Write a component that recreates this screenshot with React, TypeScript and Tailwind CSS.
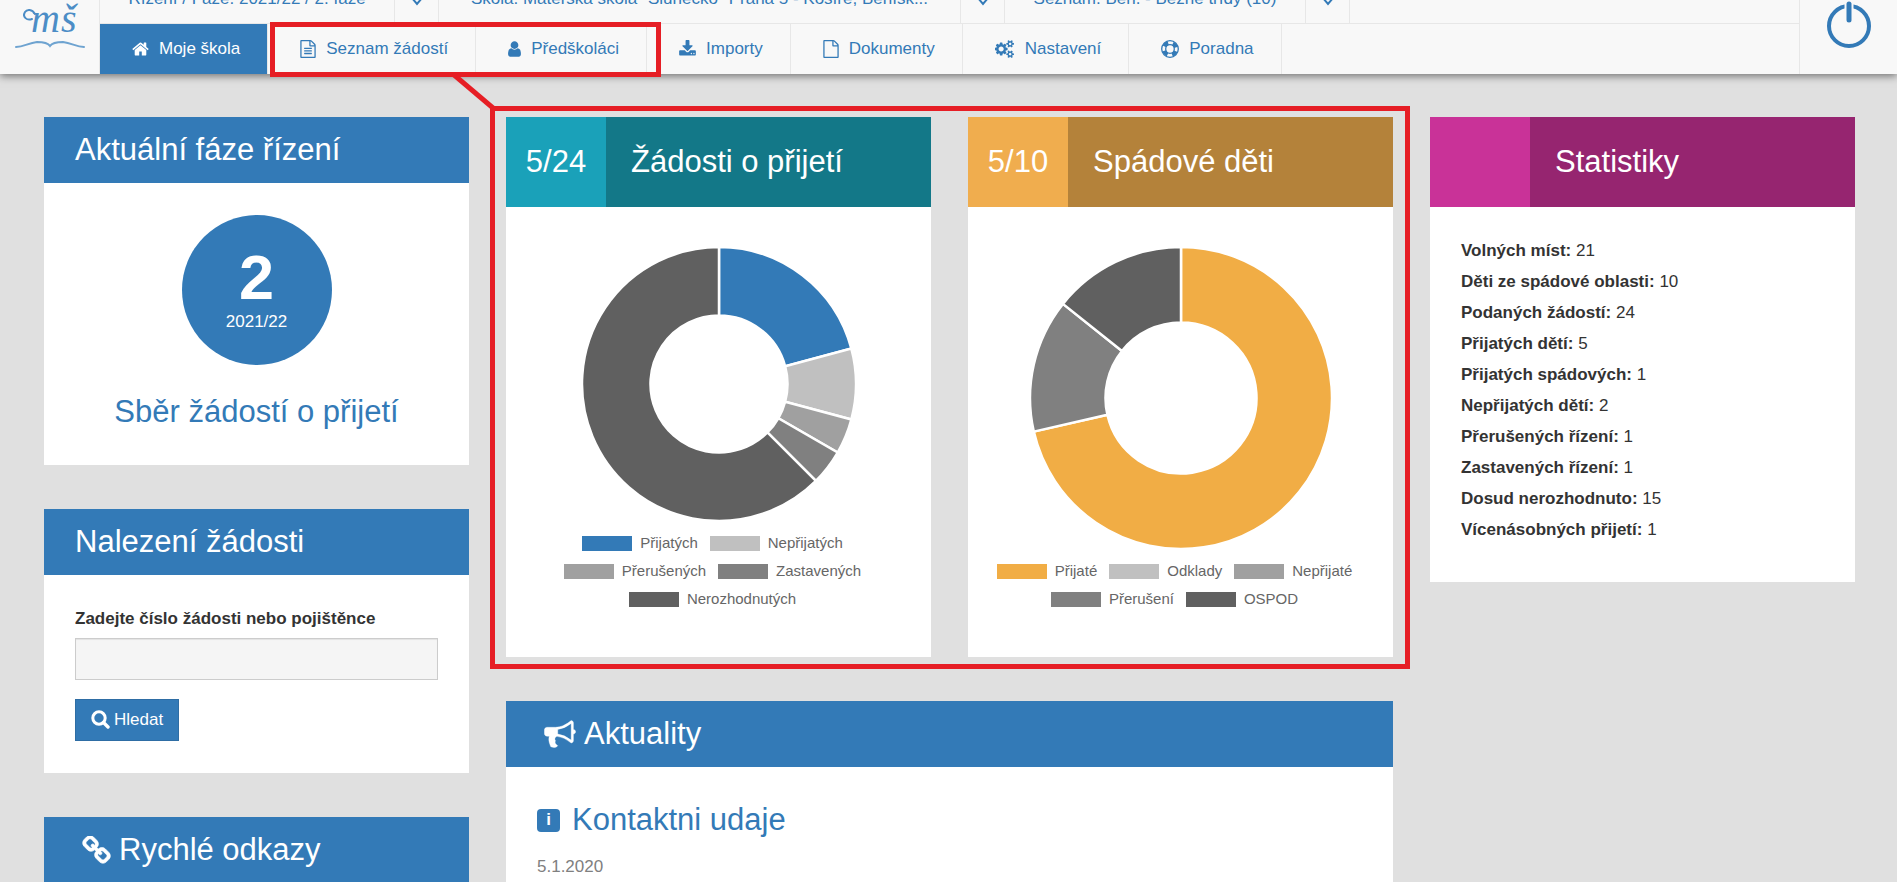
import { useId, type ReactNode } from 'react';

type IconProps = { d: string; viewBox: string; className: string };

function Icon({ d, viewBox, className }: IconProps) {
  return (
    <svg viewBox={viewBox} className={className} fill="currentColor" aria-hidden="true">
      <path d={d} />
    </svg>
  );
}

const paths = {
  home: 'M1472 992v480q0 26-19 45t-45 19h-384v-384h-256v384h-384q-26 0-45-19t-19-45v-480q0-1 .5-3t.5-3l575-474 575 474q1 2 1 6zm223-69l-62 74q-8 9-21 11h-3q-13 0-21-7l-692-577-692 577q-12 8-24 7-13-2-21-11l-62-74q-8-10-7-23.5t11-21.5l719-599q32-26 76-26t76 26l244 204v-195q0-14 9-23t23-9h192q14 0 23 9t9 23v408l219 182q10 8 11 21.5t-7 23.5z',
  fileText:
    'M1596 380q28 28 48 76t20 88v1152q0 40-28 68t-68 28h-1344q-40 0-68-28t-28-68v-1600q0-40 28-68t68-28h896q40 0 88 20t76 48zm-444-244v376h376q-10-29-22-41l-313-313q-12-12-41-22zm384 1528v-1024h-416q-40 0-68-28t-28-68v-416h-768v1536h1280zm-1024-864q0-14 9-23t23-9h704q14 0 23 9t9 23v64q0 14-9 23t-23 9h-704q-14 0-23-9t-9-23v-64zm736 224q14 0 23 9t9 23v64q0 14-9 23t-23 9h-704q-14 0-23-9t-9-23v-64q0-14 9-23t23-9h704zm0 256q14 0 23 9t9 23v64q0 14-9 23t-23 9h-704q-14 0-23-9t-9-23v-64q0-14 9-23t23-9h704z',
  file: 'M1596 380q28 28 48 76t20 88v1152q0 40-28 68t-68 28h-1344q-40 0-68-28t-28-68v-1600q0-40 28-68t68-28h896q40 0 88 20t76 48zm-444-244v376h376q-10-29-22-41l-313-313q-12-12-41-22zm384 1528v-1024h-416q-40 0-68-28t-28-68v-416h-768v1536h1280z',
  user: 'M1536 1399q0 109-62.5 187t-150.5 78h-854q-88 0-150.5-78t-62.5-187q0-85 8.5-160.5t31.5-152 58.5-131 94-89 134.5-34.5q131 128 313 128t313-128q76 0 134.5 34.5t94 89 58.5 131 31.5 152 8.5 160.5zm-256-887q0 159-112.5 271.5t-271.5 112.5-271.5-112.5-112.5-271.5 112.5-271.5 271.5-112.5 271.5 112.5 112.5 271.5z',
  download:
    'M1344 1344q0-26-19-45t-45-19-45 19-19 45 19 45 45 19 45-19 19-45zm256 0q0-26-19-45t-45-19-45 19-19 45 19 45 45 19 45-19 19-45zm128-224v320q0 40-28 68t-68 28h-1472q-40 0-68-28t-28-68v-320q0-40 28-68t68-28h465l135 136q58 56 136 56t136-56l136-136h464q40 0 68 28t28 68zm-325-569q17 41-14 70l-448 448q-18 19-45 19t-45-19l-448-448q-31-29-14-70 17-39 59-39h256v-448q0-26 19-45t45-19h256q26 0 45 19t19 45v448h256q42 0 59 39z',
  cogs: 'M832 896q0-106-75-181t-181-75-181 75-75 181 75 181 181 75 181-75 75-181zm768 512q0-52-38-90t-90-38-90 38-38 90q0 53 37.5 90.5t90.5 37.5 90.5-37.5 37.5-90.5zm0-1024q0-52-38-90t-90-38-90 38-38 90q0 53 37.5 90.5t90.5 37.5 90.5-37.5 37.5-90.5zm-384 421v185q0 10-7 19.5t-16 10.5l-155 24q-11 35-32 76 34 48 90 115 7 11 7 20 0 12-7 19-23 30-82.5 89.5t-78.5 59.5q-11 0-21-7l-115-90q-37 19-77 31-11 108-23 155-7 24-30 24h-186q-11 0-20-7.5t-10-17.5l-23-153q-34-10-75-31l-118 89q-7 7-20 7-11 0-21-8-144-133-144-160 0-9 7-19 10-14 41-53t47-61q-23-44-35-82l-152-24q-10-1-17-9.5t-7-19.5v-185q0-10 7-19.5t16-10.5l155-24q11-35 32-76-34-48-90-115-7-11-7-20 0-12 7-20 22-30 82-89t79-59q11 0 21 7l115 90q34-18 77-32 11-108 23-154 7-24 30-24h186q11 0 20 7.5t10 17.5l23 153q34 10 75 31l118-89q8-7 20-7 11 0 21 8 144 133 144 160 0 8-7 19-12 16-42 54t-45 60q23 48 34 82l152 23q10 2 17 10.5t7 19.5zm640 533v140q0 16-149 31-12 27-30 52 51 113 51 138 0 4-4 7-122 71-124 71-8 0-46-47t-52-68q-20 2-30 2t-30-2q-14 21-52 68t-46 47q-2 0-124-71-4-3-4-7 0-25 51-138-18-25-30-52-149-15-149-31v-140q0-16 149-31 13-29 30-52-51-113-51-138 0-4 4-7 4-2 35-20t59-34 30-16q8 0 46 46.5t52 67.5q20-2 30-2t30 2q51-71 92-112l6-2q4 0 124 70 4 3 4 7 0 25-51 138 17 23 30 52 149 15 149 31zm0-1024v140q0 16-149 31-12 27-30 52 51 113 51 138 0 4-4 7-122 71-124 71-8 0-46-47t-52-68q-20 2-30 2t-30-2q-14 21-52 68t-46 47q-2 0-124-71-4-3-4-7 0-25 51-138-18-25-30-52-149-15-149-31v-140q0-16 149-31 13-29 30-52-51-113-51-138 0-4 4-7 4-2 35-20t59-34 30-16q8 0 46 46.5t52 67.5q20-2 30-2t30 2q51-71 92-112l6-2q4 0 124 70 4 3 4 7 0 25-51 138 17 23 30 52 149 15 149 31z',
  chain:
    'M1520 1216q0-40-28-68l-208-208q-28-28-68-28-42 0-72 32 3 3 19 18.5t21.5 21.5 15 19 13 25.5 3.5 27.5q0 40-28 68t-68 28q-15 0-27.5-3.5t-25.5-13-19-15-21.5-21.5-18.5-19q-33 31-33 73 0 40 28 68l206 207q27 27 68 27 40 0 68-26l147-146q28-28 28-67zm-703-705q0-40-28-68l-206-207q-28-28-68-28-39 0-68 27l-147 146q-28 28-28 67 0 40 28 68l208 208q27 27 68 27 42 0 72-31-3-3-19-18.5t-21.5-21.5-15-19-13-25.5-3.5-27.5q0-40 28-68t68-28q15 0 27.5 3.5t25.5 13 19 15 21.5 21.5 18.5 19q33-31 33-73zm895 705q0 120-85 203l-147 146q-83 83-203 83-121 0-204-85l-206-207q-83-83-83-203 0-123 88-209l-88-88q-86 88-208 88-120 0-204-84l-208-208q-84-84-84-204t85-203l147-146q83-83 203-83 121 0 204 85l206 207q83 83 83 203 0 123-88 209l88 88q86-88 208-88 120 0 204 84l208 208q84 84 84 204z',
  bullhorn:
    'M1664 640q53 0 90.5 37.5t37.5 90.5-37.5 90.5-90.5 37.5v384q0 52-38 90t-90 38q-417-347-812-380-58 19-91 66t-31 100.5 40 92.5q-20 33-23 65.5t6 58 33.5 55 48 50 61.5 50.5q-29 58-111.5 83t-168.5 11.5-132-55.5q-7-23-29.5-87.5t-32-94.5-23-89-15-101 3.5-98.5 22-110.5h-122q-66 0-113-47t-47-113v-192q0-66 47-113t113-47h480q435 0 896-384 52 0 90 38t38 90v384zm-128 604v-954q-394 302-768 343v270q377 42 768 341z',
};

function LifeRing() {
  return (
    <svg viewBox="0 0 36 36" className="h-[18px] w-[18px]" fill="none" stroke="currentColor" aria-hidden="true">
      <circle cx="18" cy="18" r="16.6" strokeWidth="2.6" />
      <circle cx="18" cy="18" r="8.6" strokeWidth="2.6" />
      <circle
        cx="18"
        cy="18"
        r="12.5"
        strokeWidth="8"
        pathLength="8"
        strokeDasharray="1 1"
        strokeDashoffset="-0.5"
      />
    </svg>
  );
}

const navItems = [
  { label: 'Moje škola', icon: <Icon d={paths.home} viewBox="64 0 1664 1792" className="h-[18px] w-[17px]" />, active: true },
  { label: 'Seznam žádostí', icon: <Icon d={paths.fileText} viewBox="128 0 1536 1792" className="h-[18px] w-4" /> },
  { label: 'Předškoláci', icon: <Icon d={paths.user} viewBox="256 0 1280 1792" className="h-[18px] w-[13px]" /> },
  { label: 'Importy', icon: <Icon d={paths.download} viewBox="64 0 1664 1792" className="h-[18px] w-[17px]" /> },
  { label: 'Dokumenty', icon: <Icon d={paths.file} viewBox="128 0 1536 1792" className="h-[18px] w-4" /> },
  { label: 'Nastavení', icon: <Icon d={paths.cogs} viewBox="0 0 1920 1792" className="h-[18px] w-5" /> },
  { label: 'Poradna', icon: <LifeRing /> },
];

const contexts = [
  { label: 'Řízení / Fáze: 2021/22 / 2. fáze', width: 'min-w-[295px]' },
  { label: 'Škola: Mateřská škola "Slunečko" Praha 5 - Košíře, Beníšk...', width: 'min-w-[522px]' },
  { label: 'Seznam: Ben. - Běžné třídy (10)', width: 'min-w-[301px]' },
];

const requestSlices = [
  { label: 'Přijatých', value: 5, color: '#337ab7' },
  { label: 'Nepřijatých', value: 2, color: '#c0c0c0' },
  { label: 'Přerušených', value: 1, color: '#a0a0a0' },
  { label: 'Zastavených', value: 1, color: '#808080' },
  { label: 'Nerozhodnutých', value: 15, color: '#606060' },
];

const districtSlices = [
  { label: 'Přijaté', value: 5, color: '#f1ad45' },
  { label: 'Odklady', value: 0, color: '#c0c0c0' },
  { label: 'Nepřijaté', value: 0, color: '#a0a0a0' },
  { label: 'Přerušení', value: 1, color: '#808080' },
  { label: 'OSPOD', value: 1, color: '#606060' },
];

const stats = [
  ['Volných míst', 21],
  ['Děti ze spádové oblasti', 10],
  ['Podaných žádostí', 24],
  ['Přijatých dětí', 5],
  ['Přijatých spádových', 1],
  ['Nepřijatých dětí', 2],
  ['Přerušených řízení', 1],
  ['Zastavených řízení', 1],
  ['Dosud nerozhodnuto', 15],
  ['Vícenásobných přijetí', 1],
];

function Header() {
  return (
    <header className="relative z-10 flex h-[74px] bg-[#f8f8f8] shadow-[0_2px_8px_rgba(0,0,0,0.5)]">
      <a href="#domu" aria-label="MŠ" className="w-[100px] shrink-0 border-r border-[#e7e7e7]">
        <svg
          viewBox="0 0 99 74"
          className="h-[74px] w-[99px] overflow-visible"
          fill="none"
          stroke="#4c8dc6"
          strokeLinecap="round"
        >
          <text
            y="32"
            fontSize="40"
            fontStyle="italic"
            fontFamily="'Liberation Serif', serif"
            fill="#4c8dc6"
            stroke="none"
          >
            <tspan x="31">m</tspan>
            <tspan x="61">š</tspan>
          </text>
          <path d="M32 19c-5 2-10-2-7-7 2-3 7-3 10 2" strokeWidth="2" />
          <path
            d="M16 47c8 0 12-4 21-5 6 0 11 1 13 4 2-3 7-4 13-4 9 1 13 5 21 5"
            strokeWidth="2"
            stroke="#6ea3d0"
          />
        </svg>
      </a>

      <div className="flex min-w-0 flex-1 flex-col justify-end overflow-hidden">
        <div className="flex h-[50px] shrink-0 border-b border-[#e7e7e7]">
          {contexts.map(({ label, width }) => (
            <div key={label} className="flex">
              <a
                href="#kontext"
                className={`flex items-center justify-center border-r border-[#e7e7e7] px-6 whitespace-nowrap ${width}`}
              >
                {label}
              </a>
              <button type="button" aria-label="Vybrat" className="flex w-11 items-center justify-center border-r border-[#e7e7e7]">
                <svg viewBox="0 0 12 14" className="h-[14px] w-3" fill="none" stroke="currentColor" strokeWidth="2">
                  <path d="M1 6l5 6 5-6" />
                </svg>
              </button>
            </div>
          ))}
        </div>
        <nav className="flex h-[50px] shrink-0">
          {navItems.map(({ label, icon, active }) => (
            <a
              key={label}
              href="#menu"
              className={`flex items-center gap-[10px] border-r border-[#e7e7e7] pr-[27px] pl-8 whitespace-nowrap ${
                active ? 'bg-[#337ab7] text-white' : ''
              }`}
            >
              {icon}
              {label}
            </a>
          ))}
        </nav>
      </div>

      <button type="button" aria-label="Odhlásit" className="flex w-[98px] shrink-0 justify-center border-l border-[#e7e7e7]">
        <svg viewBox="0 0 46 50" className="h-[50px] w-[46px]" fill="none" stroke="currentColor">
          <circle cx="23" cy="26" r="20" strokeWidth="4" />
          <path d="M23 4v16" stroke="#f8f8f8" strokeWidth="9" />
          <path d="M23 4v16" strokeWidth="5" strokeLinecap="round" />
        </svg>
      </button>
    </header>
  );
}

function Panel({ title, icon, children }: { title: string; icon?: ReactNode; children?: ReactNode }) {
  return (
    <section className="bg-white">
      <h2
        className={`flex items-center gap-2 bg-[#337ab7] py-4 pr-[31px] text-[31px] leading-[34px] text-white ${
          icon ? 'pl-[38px]' : 'pl-[31px]'
        }`}
      >
        {icon}
        {title}
      </h2>
      {children}
    </section>
  );
}

type CountPanelProps = { count?: string; title: string; light: string; dark: string; children: ReactNode };

function CountPanel({ count, title, light, dark, children }: CountPanelProps) {
  return (
    <section className="bg-white">
      <header className="flex h-[90px] text-[31px] leading-[34px] text-white">
        <div className={`flex w-[100px] shrink-0 items-center justify-center ${light}`}>{count}</div>
        <h2 className={`flex flex-1 items-center pl-[25px] ${dark}`}>{title}</h2>
      </header>
      {children}
    </section>
  );
}

type Slice = { label: string; value: number; color: string };

function Doughnut({ slices, radius }: { slices: Slice[]; radius: number }) {
  const total = slices.reduce((sum, s) => sum + s.value, 0);
  const inner = radius / 2;
  const size = radius * 2;
  const point = (r: number, turn: number) => {
    const a = turn * 2 * Math.PI - Math.PI / 2;
    return `${radius + r * Math.cos(a)} ${radius + r * Math.sin(a)}`;
  };
  let from = 0;

  return (
    <div className="px-6 pt-10 pb-11">
      <svg viewBox={`0 0 ${size} ${size}`} width={size} height={size} className="mx-auto block" role="img">
        {slices
          .filter((s) => s.value > 0)
          .map((s) => {
            const start = from;
            const end = from + s.value / total;
            from = end;
            const large = end - start > 0.5 ? 1 : 0;
            return (
              <path
                key={s.label}
                fill={s.color}
                stroke="#fff"
                strokeWidth="2.5"
                d={`M${point(radius, start)}A${radius} ${radius} 0 ${large} 1 ${point(radius, end)}L${point(inner, end)}A${inner} ${inner} 0 ${large} 0 ${point(inner, start)}Z`}
              />
            );
          })}
      </svg>
      <ul className="mt-2 flex flex-wrap justify-center text-[15px] leading-7 text-[#666]">
        {slices.map((s) => (
          <li key={s.label} className="flex items-center gap-2 pr-3">
            <span className="h-[15px] w-[50px]" style={{ backgroundColor: s.color }} />
            {s.label}
          </li>
        ))}
      </ul>
    </div>
  );
}

function SearchForm() {
  const id = useId();
  return (
    <form className="flex flex-col items-start px-[31px] py-8" onSubmit={(e) => e.preventDefault()}>
      <label htmlFor={id} className="font-bold text-[#333]">
        Zadejte číslo žádosti nebo pojištěnce
      </label>
      <input
        id={id}
        type="text"
        className="mt-[7px] h-[42px] w-full border border-[#ccc] bg-[#f5f5f5] px-4 shadow-[inset_0_1px_1px_rgba(0,0,0,0.075)]"
      />
      <button
        type="submit"
        className="mt-[19px] flex h-[42px] items-center gap-1 border border-[#2e6da4] bg-[#337ab7] px-[15px] text-white"
      >
        <svg viewBox="0 0 19 21" className="h-[21px] w-[19px]" fill="none" stroke="currentColor" strokeWidth="3">
          <circle cx="8" cy="8" r="6.2" />
          <path d="M12.5 12.5l4.5 4.5" strokeWidth="3.4" strokeLinecap="round" />
        </svg>
        Hledat
      </button>
    </form>
  );
}

export default function App() {
  return (
    <div className="relative min-h-screen bg-[#e0e0e0] font-['Liberation_Sans',Arial,sans-serif] text-[17px] leading-6 text-[#337ab7]">
      <Header />

      <main className="grid grid-cols-4 items-start gap-x-[37px] pt-[43px] pr-[42px] pl-[44px]">
        <div className="flex flex-col gap-11">
          <Panel title="Aktuální fáze řízení">
            <div className="flex flex-col items-center px-[31px] pt-8 pb-9">
              <div className="flex h-[150px] w-[150px] flex-col items-center rounded-full bg-[#337ab7] pt-[29px] text-white">
                <strong className="text-[63px] leading-[66px]">2</strong>
                <span>2021/22</span>
              </div>
              <p className="mt-[30px] text-[31px] leading-[34px]">Sběr žádostí o přijetí</p>
            </div>
          </Panel>
          <Panel title="Nalezení žádosti">
            <SearchForm />
          </Panel>
          <Panel
            title="Rychlé odkazy"
            icon={
              <Icon
                d={paths.chain}
                viewBox="40 40 1712 1712"
                className="h-[29px] w-[29px] stroke-current stroke-[40]"
              />
            }
          />
        </div>

        <div className="col-span-2 flex flex-col gap-11">
          <div className="relative grid grid-cols-2 gap-x-[37px]">
            <CountPanel count="5/24" title="Žádosti o přijetí" light="bg-[#1aa1b9]" dark="bg-[#137888]">
              <Doughnut slices={requestSlices} radius={137} />
            </CountPanel>
            <CountPanel count="5/10" title="Spádové děti" light="bg-[#f0ad4e]" dark="bg-[#b4823a]">
              <Doughnut slices={districtSlices} radius={151} />
            </CountPanel>
            <div className="pointer-events-none absolute -top-[11px] -right-[17px] -bottom-3 -left-4 border-5 border-[#e61e25]" />
          </div>

          <Panel
            title="Aktuality"
            icon={<Icon d={paths.bullhorn} viewBox="-20 -20 1832 1832" className="h-8 w-8 stroke-current stroke-[20]" />}
          >
            <article className="px-[31px] pt-9 pb-8">
              <h3 className="flex items-center gap-3 text-[31px] leading-[34px]">
                <span className="flex h-[23px] w-[23px] items-center justify-center rounded bg-[#337ab7] text-[17px] font-bold text-white">
                  i
                </span>
                Kontaktni udaje
              </h3>
              <p className="mt-[18px] text-[#808080]">5.1.2020</p>
            </article>
          </Panel>
        </div>

        <CountPanel title="Statistiky" light="bg-[#c93298]" dark="bg-[#962570]">
          <ul className="px-[31px] pt-7 pb-[37px] leading-[31px] text-[#333]">
            {stats.map(([label, value]) => (
              <li key={label}>
                <strong>{label}:</strong> {value}
              </li>
            ))}
          </ul>
        </CountPanel>
      </main>

      {/* highlight around the two tabs, joined to the charts */}
      <div className="pointer-events-none absolute top-[22px] left-[270px] z-20 h-[55px] w-[391px] border-5 border-[#e61e25]" />
      <svg
        viewBox="0 0 44 36"
        className="pointer-events-none absolute top-[73px] left-[451px] z-20 h-9 w-11"
        stroke="#e61e25"
        strokeWidth="5"
      >
        <path d="M2 1l40 34" />
      </svg>
    </div>
  );
}
